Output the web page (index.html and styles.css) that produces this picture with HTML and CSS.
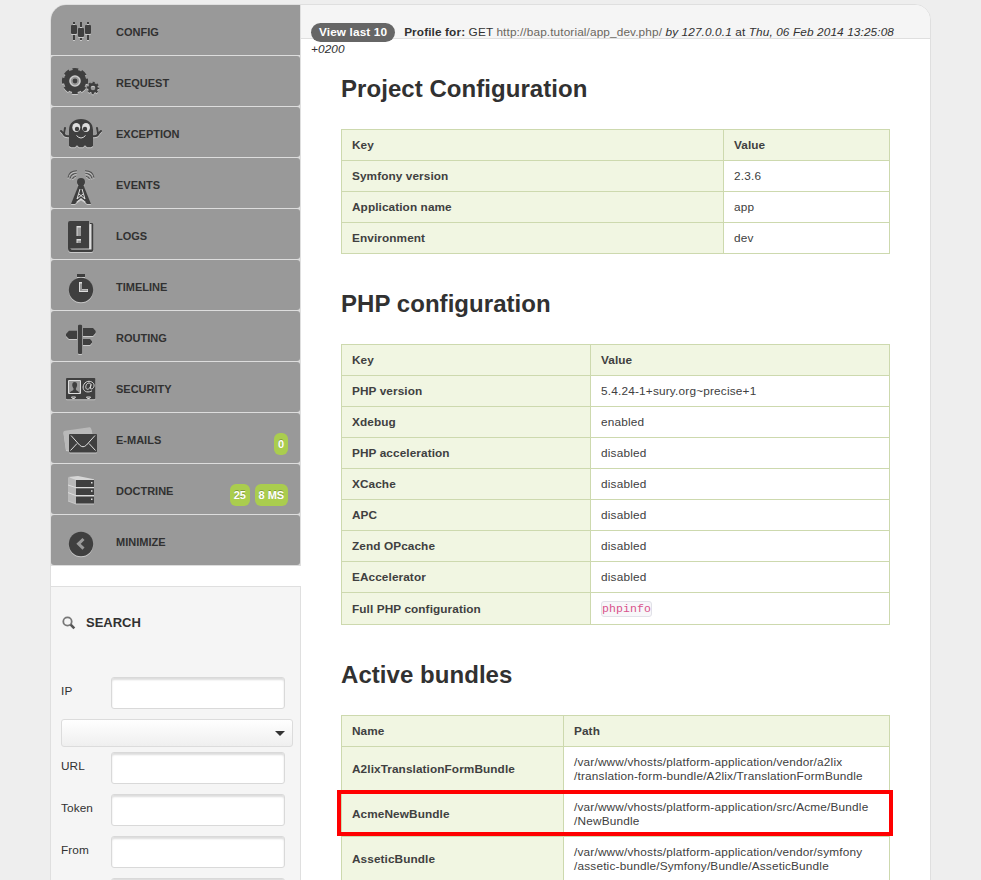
FILE: index.html
```html
<!DOCTYPE html>
<html lang="en">
<head>
<meta charset="utf-8">
<title>Profiler</title>
<link rel="stylesheet" href="styles.css">
</head>
<body>
<div class="page">
  <aside class="sidebar">
    <ul class="menu">
      <li><svg class="icon" viewBox="0 0 60 50"><path d="M20 21q0-1 1-1h4q1 0 1 1v7q0 1-1 1h-4q-1 0-1-1zM27 24q0-1 1-1h4q1 0 1 1v7q0 1-1 1h-4q-1 0-1-1zM34 21q0-1 1-1h4q1 0 1 1v7q0 1-1 1h-4q-1 0-1-1zM22 17h2v2h-2zM22 30h2v5h-2zM29 17h2v5h-2zM29 33h2v2h-2zM36 17h2v2h-2zM36 30h2v5h-2z"/></svg><span class="label">CONFIG</span></li>
      <li><svg class="icon" viewBox="0 0 60 50"><circle cx="24" cy="25" r="11.2"/><circle class="teeth" cx="24" cy="25" r="11"/><circle class="ring" cx="24" cy="25" r="5"/><circle cx="24" cy="25" r="2.4"/><circle class="thin" cx="42" cy="32" r="3.600"/><circle class="teeth-small" cx="42" cy="32" r="5"/></svg><span class="label">REQUEST</span></li>
      <li><svg class="icon" viewBox="0 0 60 50"><path d="M18 39V23c0-7 5-11 12-11s12 4 12 11v16l-2 1.300h-4l-2-2-2 2h-4l-2-2-2 2h-4z"/><path class="arm" d="M19 29c-4 1-6-1-7-3l-2-2M13 27l1-6M41 29c4 1 6-1 7-3l2-2M47 27l-1-6"/><ellipse class="light" cx="25.300" cy="20.500" rx="4" ry="4.600"/><ellipse class="light" cx="35" cy="20.500" rx="4" ry="4.600"/><circle cx="26" cy="22" r="2.200"/><circle cx="34" cy="22" r="2.200"/><path class="line" d="M25.500 28.500q4.500 5 9 0"/></svg><span class="label">EXCEPTION</span></li>
      <li><svg class="icon" viewBox="0 0 60 50"><circle cx="30" cy="24" r="4"/><path d="M28 26h4l8 20h-4l-6-6-6 6h-4z"/><path class="line" d="M29 31l-3 10 6-5M31 31l3 10-6-5M25.500 44l4.500-3 4.500 3"/><path class="wave" d="M25 18.500q-2.500 0-3.500 2.500M25.500 15.500q-5 0-6.500 5M26 12.700q-8 0-9 7M35 18.500q2.500 0 3.500 2.500M34.500 15.500q5 0 6.500 5M34 12.700q8 0 9 7"/></svg><span class="label">EVENTS</span></li>
      <li><svg class="icon" viewBox="0 0 60 50"><path d="M39 14h2q1.300 0 1.300 2v25q0 2-2 2H20q-3 0-3-4l22 1z"/><path class="light" d="M38.500 15h2v25.500h-20l-1.500-1.200h19.500z"/><path d="M17 14q0-2 2-2h19v27.500H17z"/><path class="light" d="M25.500 17h4.500v10h-4.500zM25.500 30h4.500v4h-4.500z"/><path class="mid" d="M26.500 18.500h3.500V27h-3.500zM26.500 31.500h3.500V34h-3.500z"/></svg><span class="label">LOGS</span></li>
      <li><svg class="icon" viewBox="0 0 60 50"><path d="M26 14h8v3h-8z"/><circle cx="30" cy="30" r="12.200"/><path class="light" d="M28 22h3v7h6v3h-9z"/><path class="mid" d="M29 23.500h2V29.500h5.500V31H29z"/></svg><span class="label">TIMELINE</span></li>
      <li><svg class="icon" viewBox="0 0 60 50"><path d="M27 15q0-1.300 1.300-1.300h1.500q1.300 0 1.300 1.300v27q0 1-1 1h-2q-1.100 0-1.100-1zM26 19.700v8.300h-8l-3-3v-2l3-3.300zM32 17h10l2.700 3v2L42 25H32zM32 28h7l2 2.200v1.500L39 34h-7z"/></svg><span class="label">ROUTING</span></li>
      <li><svg class="icon" viewBox="0 0 60 50"><rect x="15" y="16" width="29.300" height="21.300" rx="1"/><path class="line" d="M17.500 18.500h12v13h-12z"/><path class="mid" d="M18 19h11v12H18z"/><path d="M19 31c0-2 3-2 3.500-3.500v-1c-2-3-1.500-6.500 1.200-6.500s3.200 3.500 1.200 6.500v1C25.500 29 28 29 28 31z"/><path class="line" d="M40 22.500c-1-2.200-4-2-5 1.200-.8 3 1 4.300 2.700 3.200 1.300-.8 2-2.600 2.300-4.400l-.7 4c1.700 1.300 4.200-.8 3.700-3.800-.6-3-5.800-5-9-1.700-3.300 3.300-2 8 1.600 8.800 2 .4 4-.1 5.400-1M20.500 35h4l-1 1.500h-2zM35.500 35h4l-1 1.500h-2z"/></svg><span class="label">SECURITY</span></li>
      <li><svg class="icon" viewBox="0 0 60 50"><path class="pale" d="M12.500 19.500Q12 18 14 17.700l24.500-3.500q1 0 1.500 1L41.500 21H19l-1 16.500-3-.5z"/><rect x="18" y="21" width="28" height="18.500" rx="1"/><path class="line" d="M20 22.500l8.500 9.500q3.500 3.500 7 0l8.500-9.500M19.500 37.500l6.500-7M44.500 37.500l-6.500-7"/></svg><span class="label">E-MAILS</span><span class="badges"><b>0</b></span></li>
      <li><svg class="icon" viewBox="0 0 60 50"><path class="top" d="M17 13l10-1 16 3.300V16H25z"/><path class="pale" d="M17 13.200l8 2.800v23.500l-8-3z"/><path d="M25 16h18v7H25zM25 24.300h18v6.700H25zM25 32.500h18v7H25z"/><path class="line" d="M17 21l8 2.600h18M17 28.600l8 3h18"/><path class="light" d="M40 18h1.500v1.500H40zM40 26.300h1.500v1.500H40zM40 34.500h1.500V36H40z"/></svg><span class="label">DOCTRINE</span><span class="badges"><b>25</b><b>8 MS</b></span></li>
      <li><svg class="icon" viewBox="0 0 60 50"><circle cx="30" cy="29" r="12.200"/><path class="chevron" d="M32.500 24l-5 4.800 5 4.800"/></svg><span class="label">MINIMIZE</span></li>
    </ul>
    <form class="search">
      <h3><svg class="glass" viewBox="0 0 14 14"><circle cx="5.500" cy="5.500" r="4.200"/><path d="M8.700 8.700l3.600 3.600"/></svg>SEARCH</h3>
      <div class="field"><label for="ip">IP</label><input id="ip"></div>
      <div class="select" role="listbox"><i class="caret"></i></div>
      <div class="field"><label for="url">URL</label><input id="url"></div>
      <div class="field"><label for="token">Token</label><input id="token"></div>
      <div class="field"><label for="from">From</label><input id="from"></div>
      <div class="field"><label></label><input id="until"></div>
    </form>
  </aside>
  <main class="main">
    <header class="header"><a class="last">View last 10</a><strong>Profile for:</strong> GET <a class="url">http://bap.tutorial/app_dev.php/</a> <em>by 127.0.0.1</em> at <em>Thu, 06 Feb 2014 13:25:08 +0200</em></header>
    <div class="content">
      <h2>Project Configuration</h2>
      <table class="project">
        <tr><th class="key">Key</th><th>Value</th></tr>
        <tr><th>Symfony version</th><td>2.3.6</td></tr>
        <tr><th>Application name</th><td>app</td></tr>
        <tr><th>Environment</th><td>dev</td></tr>
      </table>
      <h2>PHP configuration</h2>
      <table class="php">
        <tr><th class="key">Key</th><th>Value</th></tr>
        <tr><th>PHP version</th><td>5.4.24-1+sury.org~precise+1</td></tr>
        <tr><th>Xdebug</th><td>enabled</td></tr>
        <tr><th>PHP acceleration</th><td>disabled</td></tr>
        <tr><th>XCache</th><td>disabled</td></tr>
        <tr><th>APC</th><td>disabled</td></tr>
        <tr><th>Zend OPcache</th><td>disabled</td></tr>
        <tr><th>EAccelerator</th><td>disabled</td></tr>
        <tr class="full"><th>Full PHP configuration</th><td><code>phpinfo</code></td></tr>
      </table>
      <h2>Active bundles</h2>
      <div class="bundles-wrap">
        <table class="bundles">
          <tr><th class="key">Name</th><th>Path</th></tr>
          <tr class="tall"><th>A2lixTranslationFormBundle</th><td>/var/www/vhosts/platform-application/vendor/a2lix<br>/translation-form-bundle/A2lix/TranslationFormBundle</td></tr>
          <tr class="tall"><th>AcmeNewBundle</th><td>/var/www/vhosts/platform-application/src/Acme/Bundle<br>/NewBundle</td></tr>
          <tr class="tall"><th>AsseticBundle</th><td>/var/www/vhosts/platform-application/vendor/symfony<br>/assetic-bundle/Symfony/Bundle/AsseticBundle</td></tr>
        </table>
        <div class="highlight"></div>
      </div>
    </div>
  </main>
</div>
</body>
</html>
```
FILE: styles.css
```css
* { box-sizing: border-box; }
html, body { height: 880px; overflow: hidden; }
body {
  margin: 0;
  background: #eee;
  color: #313131;
  font: 11.8px/14px "Liberation Sans", Arial, sans-serif;
  letter-spacing: 0.19px;
}
.page {
  display: flex;
  width: 881px;
  height: 900px;
  margin: 4px 0 0 50px;
  border: 1px solid #dfdfdf;
  border-radius: 16px 16px 0 0;
  background: #fff;
  overflow: hidden;
}
.sidebar { width: 250px; flex: none; }
.menu { list-style: none; margin: 0; padding: 0; background: #ddd; border-right: 1px solid #dfdfdf; }
.menu li {
  display: flex;
  height: 50px;
  margin-bottom: 1px;
  background: #999;
  border-radius: 3px;
}
.menu li:first-child { border-radius: 0; }
.menu { padding-bottom: 0.02px; }
.icon { width: 60px; height: 50px; margin-right: 5px; fill: #3f3f3f; filter: drop-shadow(0 1px 0 #c9c9c9); }
.icon .light { fill: #ddd; }
.icon .mid { fill: #999; }
.icon .pale { fill: #b9b9b9; }
.icon .top { fill: #d6d6d6; }
.icon .line { fill: none; stroke: #ddd; stroke-width: 1; }
.icon .wave { fill: none; stroke: #505050; stroke-width: 1.1; }
.icon .arm { fill: none; stroke: #3f3f3f; stroke-width: 2; stroke-linecap: round; }
.icon .chevron { fill: none; stroke: #999; stroke-width: 3; }
.icon .ring { fill: #999; stroke: #ccc; stroke-width: 1.6; }
.icon .thin { fill: none; stroke: #3f3f3f; stroke-width: 2.6; }
.icon .teeth { fill: none; stroke: #3f3f3f; stroke-width: 4.2; stroke-dasharray: 5.4 3.24; stroke-dashoffset: 2.7; }
.icon .teeth-small { fill: none; stroke: #3f3f3f; stroke-width: 2.4; stroke-dasharray: 2 1.927; stroke-dashoffset: 1; }
.label { padding-top: 20px; font-weight: bold; font-size: 11px; letter-spacing: 0; }
.badges { display: flex; gap: 5px; margin: 20px 12px 0 auto; }
.badges b {
  height: 22px;
  padding: 0 3.8px;
  border-radius: 6px;
  background: #aacd4e;
  color: #fff;
  font-size: 11px;
  line-height: 22px;
  letter-spacing: 0;
  text-shadow: 0 -1px 0 rgba(0, 0, 0, 0.25);
}
.search {
  height: 330px;
  margin-top: 20px;
  padding: 0 7px 0 10px;
  border: 1px solid #dfdfdf;
  border-left: 0;
  background: #f5f5f5;
}
.search h3 { display: flex; align-items: center; gap: 10px; height: 71px; margin: 0 0 19px; padding-left: 1px; font-size: 13px; letter-spacing: 0; }
.glass { width: 14px; height: 14px; fill: none; stroke: #777; stroke-width: 1.8; }
.glass path { stroke: #555; stroke-width: 2.6; }
.field { display: flex; height: 32px; margin-bottom: 10px; }
.field label { width: 50px; padding-top: 7px; letter-spacing: 0.1px; }
.field input {
  width: 174px;
  height: 32px;
  padding: 0;
  border: 1px solid #d9d9d9;
  border-radius: 3px;
  background: #fff;
  box-shadow: inset 0 2px 2px #ddd;
}
.select {
  display: flex;
  align-items: center;
  justify-content: flex-end;
  width: 232px;
  height: 28px;
  margin-bottom: 5px;
  padding-right: 7px;
  border: 1px solid #dcdcdc;
  border-radius: 3px;
  background: linear-gradient(#fff, #efefef);
}
.caret { border: 5px solid transparent; border-top: 5px solid #333; border-bottom: 0; }
.main { flex: 1; min-width: 0; }
.header { height: 34px; padding: 19px 20px 0 10px; border-bottom: 1px solid #dfdfdf; background: #f5f5f5; line-height: 17px; letter-spacing: 0.12px; }
.last {
  display: inline-block;
  height: 19px;
  margin: -1px 9px -1px 0;
  padding: 0 8px;
  border-radius: 10px;
  background: #666;
  color: #fff;
  font-weight: bold;
  line-height: 19px;
}
.url { color: #6b675f; }
.content { padding: 0 41px 0 40px; }
.content h2 { margin: 0; font-size: 24px; line-height: 28px; letter-spacing: 0.05px; }
.content h2:first-child { padding-top: 36px; }
table { width: 549px; margin: 26px 0 36px; border-collapse: collapse; table-layout: fixed; }
th, td { height: 31px; padding: 0 10px; border: 1px solid #cdd9ae; text-align: left; color: #404040; vertical-align: middle; }
th { background: #f1f6e2; letter-spacing: 0.09px; }
.project .key { width: 382px; }
.php .key { width: 249px; }
.bundles .key { width: 222px; }
.full th, .full td { height: 32px; }
.tall th, .tall td { height: 45px; }
code {
  display: inline-block;
  height: 16px;
  border: 1px solid #e1e1e8;
  border-radius: 3px;
  background: #f7f7f9;
  color: #d9538c;
  font: 11.5px/14px "Liberation Mono", monospace;
  letter-spacing: 0.1px;
}
.bundles-wrap { position: relative; }
.highlight { position: absolute; left: -4px; top: 75px; width: 556px; height: 46px; border: 4px solid #f00; }
```
